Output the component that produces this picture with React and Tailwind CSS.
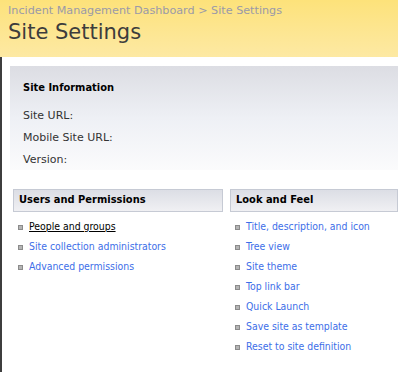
const USERS_LINKS = [
  { label: 'People and groups', active: true },
  { label: 'Site collection administrators' },
  { label: 'Advanced permissions' },
];

const LOOK_LINKS = [
  { label: 'Title, description, and icon' },
  { label: 'Tree view' },
  { label: 'Site theme' },
  { label: 'Top link bar' },
  { label: 'Quick Launch' },
  { label: 'Save site as template' },
  { label: 'Reset to site definition' },
];

function LinkList({ links }) {
  return (
    <ul className="mt-[5px] flex flex-col">
      {links.map(({ label, active }) => (
        <li key={label} className="flex h-[20px] items-center pl-[5px]">
          <span className="mr-[6px] h-[5px] w-[5px] border border-[#8b8b8b] bg-[#b5b5b5]" />
          <a
            href="#"
            className={
              active
                ? "font-['DejaVu_Sans_Condensed',sans-serif] text-[10.4px] text-black underline"
                : "font-['DejaVu_Sans_Condensed',sans-serif] text-[10.4px] text-[#3d6ee8]"
            }
          >
            {label}
          </a>
        </li>
      ))}
    </ul>
  );
}

function SectionHeader({ children }) {
  return (
    <div className="flex h-[23px] items-center border border-[#c6cad4] bg-gradient-to-b from-[#dcdee5] to-[#f0f0f3] px-[5px] font-['DejaVu_Sans_Condensed',sans-serif] text-[11px] font-bold text-black">
      {children}
    </div>
  );
}

export default function App() {
  return (
    <div className="h-[372px] w-[398px] overflow-hidden bg-white font-['DejaVu_Sans',sans-serif]">
      <div className="h-[57px] bg-gradient-to-b from-[#fde27a] to-[#fde9a3] pl-[8px] pt-[3px]">
        <div className="text-[11.2px] leading-[16px] text-[#9a9aa8]">
          Incident Management Dashboard &gt; Site Settings
        </div>
        <h1 className="text-[21px] leading-[26px] text-[#3c3c3c]">Site Settings</h1>
      </div>

      <div className="h-[315px] border-l-[2px] border-[#3e3e3e] pt-[9px]">
        <div className="ml-[8px] h-[104px] bg-gradient-to-b from-[#dcdde3] via-[#eef0f5] to-[#fbfbfc] pl-[13px] pt-[14px]">
          <div className="font-['DejaVu_Sans_Condensed',sans-serif] text-[11px] font-bold leading-[16px] text-black">
            Site Information
          </div>
          <div className="mt-[9px] flex flex-col text-[11px] leading-[22px] text-[#333]">
            <span>Site URL:</span>
            <span>Mobile Site URL:</span>
            <span>Version:</span>
          </div>
        </div>

        <div className="mt-[19px] flex gap-[7px] pl-[11px]">
          <div className="w-[210px]">
            <SectionHeader>Users and Permissions</SectionHeader>
            <LinkList links={USERS_LINKS} />
          </div>
          <div className="flex-1">
            <SectionHeader>Look and Feel</SectionHeader>
            <LinkList links={LOOK_LINKS} />
          </div>
        </div>
      </div>
    </div>
  );
}
